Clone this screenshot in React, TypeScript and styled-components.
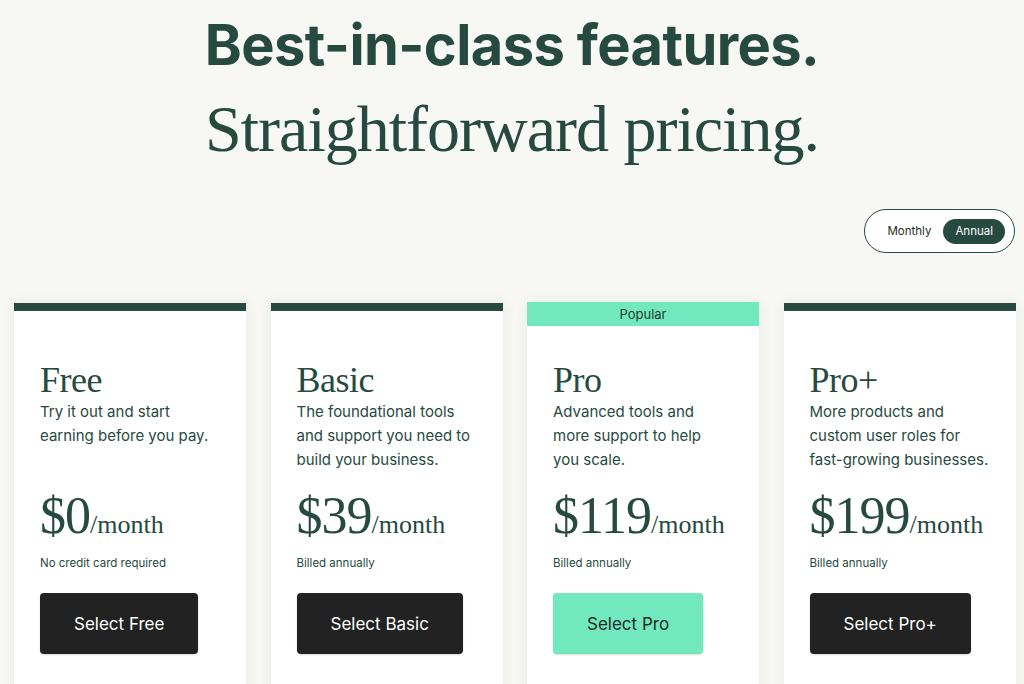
import React, { useState } from 'react';
import styled, { createGlobalStyle } from 'styled-components';

const GlobalStyle = createGlobalStyle`
  html, body {
    margin: 0;
    padding: 0;
    background: #f7f7f3;
  }
  body {
    font-family: Inter, "Liberation Sans", sans-serif;
    color: #264a40;
    overflow: hidden;
  }
`;

const Page = styled.div`
  width: 1024px;
  height: 684px;
  overflow: hidden;
`;

const Hero = styled.header`
  display: flex;
  flex-direction: column;
  align-items: center;
  padding-top: 11px;
`;

const HeadlineBold = styled.h1`
  margin: 0;
  font-family: Inter, "Liberation Sans", sans-serif;
  font-weight: 700;
  font-size: 56px;
  line-height: 68px;
  letter-spacing: -0.6px;
  color: #264a40;
`;

const HeadlineSerif = styled.h2`
  margin: 13px 0 0;
  font-family: "Liberation Serif", "DejaVu Serif", serif;
  font-weight: 400;
  font-size: 66px;
  line-height: 74px;
  letter-spacing: -1px;
  color: #264a40;
`;

const ToggleRow = styled.div`
  display: flex;
  justify-content: flex-end;
  padding: 43px 9px 0 0;
`;

const Toggle = styled.div`
  display: flex;
  align-items: center;
  gap: 12px;
  height: 42px;
  padding: 0 9px 0 22px;
  background: #ffffff;
  border: 1px solid #264a40;
  border-radius: 22px;
`;

const ToggleOption = styled.button<{ $active: boolean }>`
  border: none;
  cursor: pointer;
  font-family: Inter, "Liberation Sans", sans-serif;
  font-size: 11.5px;
  height: 25px;
  padding: 0 ${({ $active }) => ($active ? '12px' : '0')};
  border-radius: 13px;
  background: ${({ $active }) => ($active ? '#264a40' : 'transparent')};
  color: ${({ $active }) => ($active ? '#ffffff' : '#1f2b27')};
`;

const Cards = styled.div`
  display: grid;
  grid-template-columns: repeat(4, 232px);
  column-gap: 24.5px;
  padding: 50px 0 0 14px;
`;

const Card = styled.article`
  position: relative;
  background: #ffffff;
  height: 400px;
  padding: 57px 20px 0 26px;
  box-shadow: 0 0 14px rgba(40, 60, 50, 0.07);
`;

const TopBar = styled.div<{ $popular: boolean }>`
  position: absolute;
  left: 0;
  right: 0;
  top: ${({ $popular }) => ($popular ? '-1px' : '0')};
  height: ${({ $popular }) => ($popular ? '24px' : '8px')};
  background: ${({ $popular }) => ($popular ? '#72e8bf' : '#264a40')};
  display: flex;
  align-items: center;
  justify-content: center;
  font-size: 13px;
  color: #1f3a33;
`;

const PlanName = styled.h3`
  margin: 0;
  font-family: "Liberation Serif", "DejaVu Serif", serif;
  font-weight: 400;
  font-size: 36px;
  line-height: 40px;
  letter-spacing: -0.5px;
  color: #264a40;
`;

const Description = styled.p`
  margin: 0 0 15px;
  min-height: 72px;
  white-space: pre-line;
  font-size: 15px;
  line-height: 24px;
  color: #264a40;
`;

const Price = styled.div`
  font-family: "Liberation Serif", "DejaVu Serif", serif;
  font-size: 52px;
  line-height: 57px;
  letter-spacing: -1px;
  color: #264a40;
`;

const Period = styled.span`
  font-size: 26px;
  letter-spacing: 0;
`;

const Note = styled.div`
  margin-top: 2px;
  font-size: 11.5px;
  line-height: 16px;
  color: #264a40;
`;

const SelectButton = styled.button<{ $popular: boolean }>`
  margin-top: 22px;
  height: 61px;
  padding: 0 34px;
  border: none;
  border-radius: 4px;
  cursor: pointer;
  font-family: Inter, "Liberation Sans", sans-serif;
  font-size: 17px;
  background: ${({ $popular }) => ($popular ? '#72e8bf' : '#222222')};
  color: ${({ $popular }) => ($popular ? '#1f2b27' : '#ffffff')};
  box-shadow: 0 1px 2px rgba(0, 0, 0, 0.15);
`;

const plans = [
  {
    name: 'Free',
    description: 'Try it out and start\nearning before you pay.',
    price: '$0',
    note: 'No credit card required',
    popular: false,
  },
  {
    name: 'Basic',
    description: 'The foundational tools\nand support you need to\nbuild your business.',
    price: '$39',
    note: 'Billed annually',
    popular: false,
  },
  {
    name: 'Pro',
    description: 'Advanced tools and\nmore support to help\nyou scale.',
    price: '$119',
    note: 'Billed annually',
    popular: true,
  },
  {
    name: 'Pro+',
    description: 'More products and\ncustom user roles for\nfast-growing businesses.',
    price: '$199',
    note: 'Billed annually',
    popular: false,
  },
];

export default function App() {
  const [billing, setBilling] = useState<'monthly' | 'annual'>('annual');

  return (
    <Page>
      <GlobalStyle />
      <Hero>
        <HeadlineBold>Best-in-class features.</HeadlineBold>
        <HeadlineSerif>Straightforward pricing.</HeadlineSerif>
      </Hero>
      <ToggleRow>
        <Toggle>
          <ToggleOption $active={billing === 'monthly'} onClick={() => setBilling('monthly')}>
            Monthly
          </ToggleOption>
          <ToggleOption $active={billing === 'annual'} onClick={() => setBilling('annual')}>
            Annual
          </ToggleOption>
        </Toggle>
      </ToggleRow>
      <Cards>
        {plans.map((plan) => (
          <Card key={plan.name}>
            <TopBar $popular={plan.popular}>{plan.popular ? 'Popular' : null}</TopBar>
            <PlanName>{plan.name}</PlanName>
            <Description>{plan.description}</Description>
            <Price>
              {plan.price}
              <Period>/month</Period>
            </Price>
            <Note>{plan.note}</Note>
            <SelectButton $popular={plan.popular}>Select {plan.name}</SelectButton>
          </Card>
        ))}
      </Cards>
    </Page>
  );
}
